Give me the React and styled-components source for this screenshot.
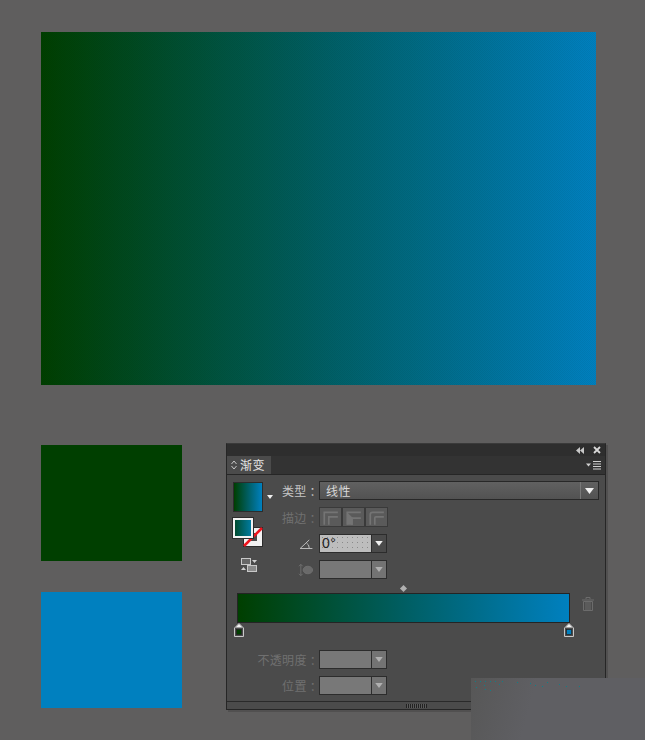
import React from "react";
import styled, { createGlobalStyle } from "styled-components";

const Global = createGlobalStyle`
  html, body { margin: 0; padding: 0; background: #5f5e5e; }
  body { font-family: "Noto Sans CJK SC", "Liberation Sans", sans-serif; overflow: hidden; }
`;
const Page = styled.div`
  position: relative; width: 645px; height: 740px; box-sizing: border-box; overflow: hidden;
  padding: 32px 0 0 41px; background: #5f5e5e;
`;
const Artboard = styled.div`
  width: 555px; height: 353px;
  background:
    repeating-conic-gradient(rgba(0,0,0,.05) 0 25%, transparent 0 50%) 0 0/2px 2px,
    linear-gradient(90deg, #003f00 0%, #005e62 50%, #0080bf 100%);
`;
const Lower = styled.div`
  display: flex; align-items: flex-start; margin-top: 58px; gap: 44px;
`;
const Swatches = styled.div`
  display: flex; flex-direction: column; gap: 31px; padding-top: 2px; width: 141px;
`;
const Swatch = styled.div`
  width: 141px; height: ${p => p.$h}px; background: ${p => p.$c};
`;
const Panel = styled.div`
  width: 380px; height: 267px; box-sizing: border-box; background: #4b4b4b;
  border: 1px solid #262626; border-top-color: #3a3a3a; display: flex; flex-direction: column;
  box-shadow: 2px 2px 0 rgba(70,70,70,.55);
`;
const TitleBar = styled.div`
  height: 12px; flex: none; background: #2e2e2e; display: flex; justify-content: flex-end;
  align-items: center; gap: 9px; padding-right: 4px;
`;
const TabRow = styled.div`
  height: 18px; flex: none; display: flex; background: #333333; border-bottom: 1px solid #262626;
`;
const Tab = styled.div`
  width: 44px; background: #4b4b4b; color: #e4e4e4; font-size: 12px; line-height: 18px;
  display: flex; align-items: center; gap: 3px; padding-left: 4px; box-sizing: border-box;
  letter-spacing: .5px;
`;
const TabEnd = styled.div`
  flex: 1; display: flex; justify-content: flex-end; align-items: center; padding-right: 4px;
`;
const Body = styled.div`
  flex: 1; display: flex; flex-direction: column; min-height: 0;
`;
const Top = styled.div`
  display: flex; padding: 6px 6px 0 6px; height: 107px; box-sizing: border-box; flex: none;
`;
const LeftCol = styled.div`
  width: 49px; flex: none; display: flex; flex-direction: column;
`;
const MainSwatch = styled.div`
  display: flex; align-items: center; gap: 4px; height: 31px;
`;
const Preview = styled.div`
  width: 30px; height: 30px; box-sizing: border-box; border: 1px solid #2c2c2c;
  background: linear-gradient(90deg, #003f00, #005e62 50%, #0080bf);
`;
const FillStroke = styled.div`
  position: relative; width: 30px; height: 30px; margin-top: 6px;
`;
const FillBox = styled.div`
  position: absolute; left: 0; top: 0; width: 20px; height: 20px; box-sizing: border-box;
  border: 2px solid #f2f2f2; box-shadow: 0 0 0 1px #2c2c2c;
  background: linear-gradient(90deg, #004c30, #007ba0); z-index: 2;
`;
const StrokeBox = styled.svg`
  position: absolute; left: 10px; top: 9px;
`;
const SwapIcon = styled.svg`
  margin: 10px 0 0 8px; display: block;
`;
const RightCol = styled.div`
  flex: 1; display: flex; flex-direction: column; gap: 7px; padding-left: 0;
`;
const Row = styled.div`
  display: flex; align-items: center; height: ${p => p.$h || 19}px;
`;
const Label = styled.div`
  width: ${p => p.$w || 37}px; flex: none; font-size: 12px; letter-spacing: .3px; white-space: pre;
  color: ${p => (p.$dim ? "#707070" : "#c4c4c4")}; line-height: 19px;
`;
const Select = styled.div`
  flex: 1; height: 19px; box-sizing: border-box; border: 1px solid #282828;
  background: linear-gradient(#616161, #525252); display: flex; align-items: center;
  color: #d8d8d8; font-size: 12px; padding-left: 6px; letter-spacing: .5px;
`;
const SelectText = styled.span` flex: 1; `;
const SelectArrow = styled.div`
  width: 18px; height: 100%; flex: none; border-left: 1px solid #787878; box-sizing: border-box;
  display: flex; align-items: center; justify-content: center;
`;
const CornerGroup = styled.div`
  display: flex;
`;
const CornerBtn = styled.div`
  width: 23px; height: 20px; box-sizing: border-box; border: 1px solid #3a3a3a; background: #5a5a5a;
  display: flex; align-items: center; justify-content: center;
`;
const IconSlot = styled.div`
  width: 37px; flex: none; display: flex; justify-content: flex-end; padding-right: 6px; box-sizing: border-box;
`;
const Field = styled.div`
  display: flex; height: 19px; width: 68px; box-sizing: border-box; border: 1px solid #2c2c2c;
`;
const FieldInput = styled.div`
  flex: 1; font-family: "Liberation Sans", sans-serif; font-size: 14px; line-height: 16px; color: #222;
  padding-left: 2px; letter-spacing: .5px;
  background: ${p => p.$on
    ? "radial-gradient(circle, #8a8a8a .6px, transparent .9px) 0 0/5px 5px, #bdbdbd"
    : "#787878"};
`;
const FieldArrow = styled.div`
  width: 15px; flex: none; border-left: 1px solid #2c2c2c; box-sizing: border-box;
  display: flex; align-items: center; justify-content: center;
  background: ${p => (p.$on ? "#4a4a4a" : "#737373")};
`;
const SliderArea = styled.div`
  height: 60px; flex: none; padding: 11px 0 0 10px; box-sizing: border-box; display: flex; align-items: flex-start; position: relative;
`;
const Diamond = styled.div`
  position: absolute; left: 174px; top: 4px; width: 5px; height: 5px; background: #b0b0b0; transform: rotate(45deg);
`;
const Track = styled.div`
  position: relative; width: 333px; height: 30px; box-sizing: border-box; border: 1px solid #242424;
  background: linear-gradient(90deg, #003f00, #005e62 50%, #0080bf);
`;
const Stop = styled.svg`
  position: absolute; top: 29px; left: ${p => p.$x}px;
`;
const Trash = styled.svg`
  margin: 4px 0 0 12px; flex: none;
`;
const Fields = styled.div`
  margin-top: 8px; display: flex; flex-direction: column; gap: 7px;
`;
const FieldRow = styled.div`
  display: flex; align-items: center; height: 19px; justify-content: flex-end; width: 160px;
`;
const FieldLabel = styled.div`
  font-size: 12px; letter-spacing: .3px; color: #707070; margin-right: -3px; white-space: pre; line-height: 19px;
`;
const Footer = styled.div`
  margin-top: auto; height: 7px; flex: none; border-top: 1px solid #2a2a2a; display: flex; justify-content: center;
  align-items: center; background: #4b4b4b;
`;
const Grip = styled.div`
  width: 21px; height: 4px;
  background: repeating-linear-gradient(90deg, #222 0 1px, #5a5a5a 1px 2px);
`;
const Watermark = styled.div`
  position: absolute; left: 471px; top: 678px; width: 174px; height: 62px;
  background: linear-gradient(105deg, #575757 0%, #5f5f63 35%);
`;
const Dots = styled.svg`
  display: block;
`;

const Arrow = ({ c = "#f0f0f0", w = 9, h = 6 }) => (
  <svg width={w} height={h} viewBox="0 0 9 6"><path d="M0 0H9L4.5 6Z" fill={c} /></svg>
);

const Corner = ({ v }) => (
  <svg width="17" height="15" viewBox="0 0 15 13" fill="none" stroke="#747474" strokeWidth="2">
    {v === 0 && <path d="M2 13V2H14M6 13V6H14" strokeWidth="1.5" />}
    {v === 1 && <><path d="M2 13V2H14M6 13V7H14" strokeWidth="1.5" /><path d="M2 2L7 7V13H2Z" fill="#747474" stroke="none" /></>}
    {v === 2 && <path d="M2 13V4Q2 2 4 2H14M6 13V7Q6 6 7 6H14" strokeWidth="1.5" />}
  </svg>
);

const StopMark = ({ x, c }) => (
  <Stop $x={x} width="10" height="14" viewBox="0 0 10 14">
    <path d="M5 .5L9.5 5V13.5H.5V5Z" fill="#4b4b4b" stroke="#c8c8c8" />
    <path d="M5 1L8.5 4.6H1.5Z" fill="#f2f2f2" />
    <rect x="2.5" y="6.5" width="5" height="5" fill={c} stroke="#222" strokeWidth=".7" />
  </Stop>
);

const dots = [[4,9],[9,9],[14,9],[19,9],[24,9],[31,9],[13,13],[46,10],[59,11],[64,13],[76,10],[71,14],[95,14],[28,12],[88,12],[108,14],[5,15],[14,17],[19,18]];

export default function App() {
  return (
    <Page>
      <Global />
      <Artboard />
      <Lower>
        <Swatches>
          <Swatch $h={116} $c="#003f00" />
          <Swatch $h={116} $c="#0080bf" />
        </Swatches>
        <Panel>
          <TitleBar>
            <svg width="8" height="7" viewBox="0 0 8 7"><path d="M4 0V7L0 3.5ZM8 0V7L4 3.5Z" fill="#c8c8c8" /></svg>
            <svg width="8" height="8" viewBox="0 0 8 8"><path d="M1 1L7 7M7 1L1 7" stroke="#d8d8d8" strokeWidth="1.8" /></svg>
          </TitleBar>
          <TabRow>
            <Tab>
              <svg width="6" height="10" viewBox="0 0 6 10" fill="none" stroke="#c8c8c8"><path d="M.5 4L3 1L5.5 4M.5 6L3 9L5.5 6" /></svg>
              渐变
            </Tab>
            <TabEnd>
              <svg width="15" height="9" viewBox="0 0 15 9">
                <path d="M0 2.5H5L2.5 5.5Z" fill="#d0d0d0" />
                <path d="M7 .5H15M7 3H15M7 5.5H15M7 8H15" stroke="#d0d0d0" />
              </svg>
            </TabEnd>
          </TabRow>
          <Body>
            <Top>
              <LeftCol>
                <MainSwatch>
                  <Preview />
                  <svg width="6" height="4" viewBox="0 0 6 4"><path d="M0 0H6L3 4Z" fill="#f0f0f0" /></svg>
                </MainSwatch>
                <FillStroke>
                  <StrokeBox width="20" height="20" viewBox="0 0 20 20">
                    <rect x=".5" y=".5" width="19" height="19" fill="#f2f2f2" stroke="#2c2c2c" />
                    <rect x="6" y="6" width="8" height="8" fill="#4b4b4b" />
                    <path d="M1 19L19 1" stroke="#f0141e" strokeWidth="2.6" />
                  </StrokeBox>
                  <FillBox />
                </FillStroke>
                <SwapIcon width="16" height="14" viewBox="0 0 16 14">
                  <rect x=".5" y=".5" width="9" height="6" fill="#666" stroke="#c8c8c8" />
                  <path d="M11 2H16L13.5 5Z" fill="#d0d0d0" />
                  <path d="M0 12L2.5 9L5 12Z" fill="#d0d0d0" />
                  <rect x="6.5" y="7.5" width="9" height="6" fill="#8a8a8a" stroke="#c8c8c8" />
                </SwapIcon>
              </LeftCol>
              <RightCol>
                <Row>
                  <Label>类型 ：</Label>
                  <Select>
                    <SelectText>线性</SelectText>
                    <SelectArrow><Arrow /></SelectArrow>
                  </Select>
                </Row>
                <Row $h={20}>
                  <Label $dim>描边 ：</Label>
                  <CornerGroup>
                    <CornerBtn><Corner v={0} /></CornerBtn>
                    <CornerBtn><Corner v={1} /></CornerBtn>
                    <CornerBtn><Corner v={2} /></CornerBtn>
                  </CornerGroup>
                </Row>
                <Row>
                  <IconSlot>
                    <svg width="13" height="10" viewBox="0 0 14 11" fill="none" stroke="#c8c8c8"><path d="M0 10.5H13.5M0 10.5L10 1M7 4.5Q10 6 10 10" /></svg>
                  </IconSlot>
                  <Field>
                    <FieldInput $on>0°</FieldInput>
                    <FieldArrow $on><Arrow w={8} h={5} /></FieldArrow>
                  </Field>
                </Row>
                <Row>
                  <IconSlot>
                    <svg width="15" height="14" viewBox="0 0 16 14" fill="none" stroke="#707070"><path d="M3 1V13M1 3L3 1L5 3M1 11L3 13L5 11" /><ellipse cx="10.5" cy="7" rx="5" ry="4" fill="#6a6a6a" /></svg>
                  </IconSlot>
                  <Field>
                    <FieldInput />
                    <FieldArrow><Arrow c="#b0b0b0" w={8} h={5} /></FieldArrow>
                  </Field>
                </Row>
              </RightCol>
            </Top>
            <SliderArea>
              <Diamond />
              <Track>
                <StopMark x={-4} c="#003f00" />
                <StopMark x={326} c="#0080bf" />
              </Track>
              <Trash width="12" height="14" viewBox="0 0 12 14" fill="none" stroke="#6c6c6c">
                <path d="M0 3H12M4 2V.5H8V2" />
                <path d="M1.5 4.5H10.5V13.5H1.5ZM4 5V13M6 5V13M8 5V13" />
              </Trash>
            </SliderArea>
            <Fields>
              <FieldRow>
                <FieldLabel>不透明度 ：</FieldLabel>
                <Field>
                  <FieldInput />
                  <FieldArrow><Arrow c="#b0b0b0" w={8} h={5} /></FieldArrow>
                </Field>
              </FieldRow>
              <FieldRow>
                <FieldLabel>位置 ：</FieldLabel>
                <Field>
                  <FieldInput />
                  <FieldArrow><Arrow c="#b0b0b0" w={8} h={5} /></FieldArrow>
                </Field>
              </FieldRow>
            </Fields>
            <Footer><Grip /></Footer>
          </Body>
        </Panel>
      </Lower>
      <Watermark>
        <Dots width="174" height="30" viewBox="0 0 174 30">
          {dots.map(([x, y], i) => <rect key={i} x={x} y={y - 6} width="1" height="1" fill="#108088" />)}
        </Dots>
      </Watermark>
    </Page>
  );
}
